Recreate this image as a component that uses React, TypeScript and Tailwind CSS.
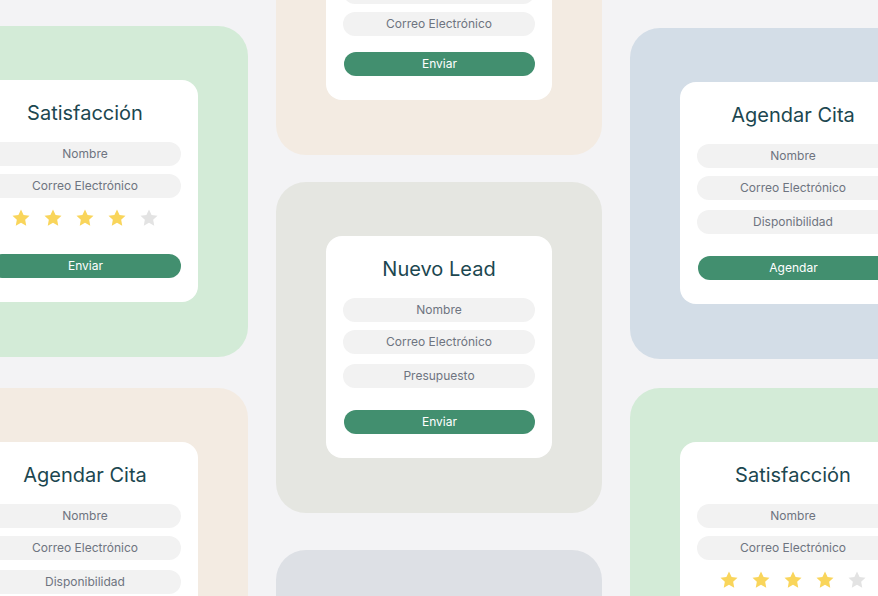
type CardData = {
  title: string;
  fields: string[];
  button: string;
  rating?: number;
};

type TileData = {
  bg: string;
  gap: string;
  card: CardData;
};

const satisfaccion: CardData = {
  title: "Satisfacción",
  fields: ["Nombre", "Correo Electrónico"],
  button: "Enviar",
  rating: 4,
};

const agendar: CardData = {
  title: "Agendar Cita",
  fields: ["Nombre", "Correo Electrónico", "Disponibilidad"],
  button: "Agendar",
};

const lead: CardData = {
  title: "Nuevo Lead",
  fields: ["Nombre", "Correo Electrónico", "Presupuesto"],
  button: "Enviar",
};

const contacto: CardData = {
  title: "Contacto",
  fields: ["Nombre", "Correo Electrónico"],
  button: "Enviar",
};

const columns: { offset: string; tiles: TileData[] }[] = [
  {
    offset: "mt-[26px]",
    tiles: [
      { bg: "bg-[#d3ebd7]", gap: "", card: satisfaccion },
      { bg: "bg-[#f3ebe2]", gap: "mt-[31px]", card: agendar },
    ],
  },
  {
    offset: "-mt-[136px]",
    tiles: [
      { bg: "bg-[#f3ebe2]", gap: "", card: contacto },
      { bg: "bg-[#e5e6e1]", gap: "mt-[27px]", card: lead },
      { bg: "bg-[#dde0e5]", gap: "mt-[37px]", card: contacto },
    ],
  },
  {
    offset: "mt-[28px]",
    tiles: [
      { bg: "bg-[#d3dde7]", gap: "", card: agendar },
      { bg: "bg-[#d3ebd7]", gap: "mt-[29px]", card: satisfaccion },
    ],
  },
];

function Star({ filled }: { filled: boolean }) {
  return (
    <svg viewBox="0 0 24 24" className="w-5 h-5">
      <path
        d="M12 1.8l3.1 6.5 7.1.9-5.2 4.9 1.3 7.1L12 17.8l-6.3 3.4 1.3-7.1-5.2-4.9 7.1-.9z"
        fill={filled ? "#f9d55b" : "#e3e3e3"}
      />
    </svg>
  );
}

function FormCard({ card }: { card: CardData }) {
  const buttonGap = card.rating !== undefined ? "mt-[26px]" : card.fields.length === 3 ? "mt-[22px]" : "mt-4";

  return (
    <div className="w-[226px] bg-white rounded-2xl px-[17px] pt-[19px] pb-6 flex flex-col">
      <h2 className="h-7 leading-7 text-xl text-center text-[#1c4750]">{card.title}</h2>

      <div className="mt-[15px] flex flex-col">
        {card.fields.map((f, i) => (
          <div
            key={f}
            className={`h-6 rounded-full bg-[#f2f2f2] flex items-center justify-center text-xs text-[#6e7480] ${
              i === 0 ? "" : i === 1 ? "mt-2" : "mt-[10px]"
            }`}
          >
            {f}
          </div>
        ))}

        {card.rating !== undefined && (
          <div className="mt-[10px] flex justify-center gap-3">
            {[0, 1, 2, 3, 4].map((n) => (
              <Star key={n} filled={n < (card.rating ?? 0)} />
            ))}
          </div>
        )}
      </div>

      <button
        className={`${buttonGap} ml-px h-6 rounded-full bg-[#428f6f] text-white text-xs flex items-center justify-center`}
      >
        {card.button}
      </button>
    </div>
  );
}

export default function App() {
  return (
    <div className="w-[878px] h-[596px] overflow-hidden bg-[#f3f3f5] font-['Inter',sans-serif]">
      <div className="flex items-start gap-[28px] -ml-[78px]">
        {columns.map((col, ci) => (
          <div key={ci} className={`w-[326px] shrink-0 flex flex-col ${col.offset}`}>
            {col.tiles.map((t, ti) => (
              <div
                key={ti}
                className={`${t.bg} ${t.gap} rounded-[30px] pt-[54px] pb-[55px] flex justify-center`}
              >
                <FormCard card={t.card} />
              </div>
            ))}
          </div>
        ))}
      </div>
    </div>
  );
}
